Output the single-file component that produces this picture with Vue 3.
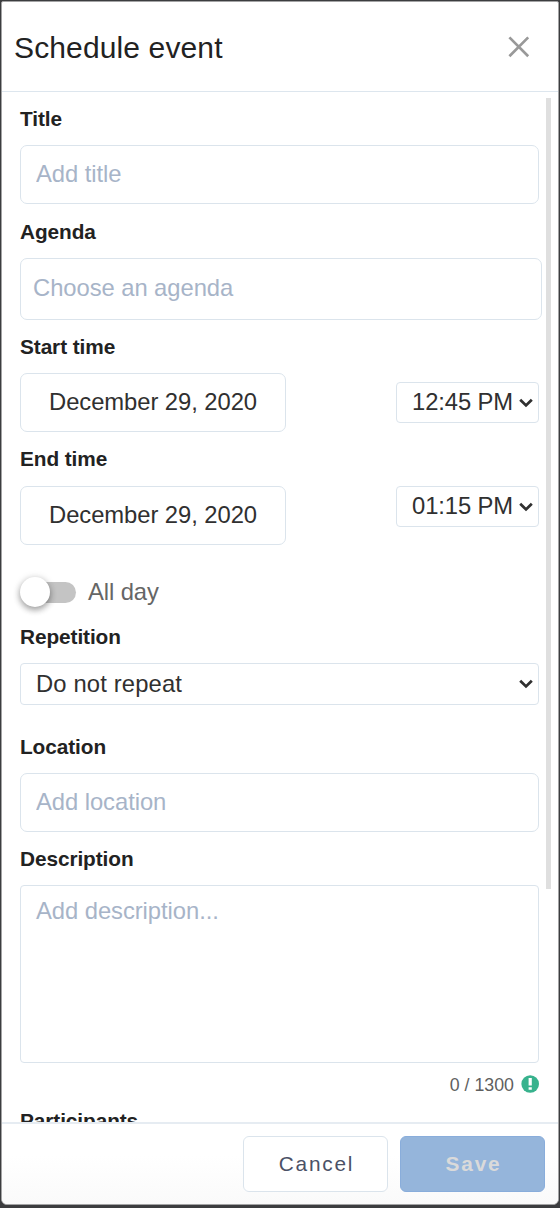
<script setup>
import { ref } from 'vue'

const title = ref('')
const agenda = ref('')
const startTime = ref('12:45 PM')
const endTime = ref('01:15 PM')
const allDay = ref(false)
const repetition = ref('Do not repeat')
const location = ref('')
const description = ref('')
</script>

<template>
  <div class="backdrop">
    <section class="modal">
      <header class="head">
        <h1>Schedule event</h1>
        <button class="close" aria-label="Close">
          <svg width="22" height="22" viewBox="0 0 22 22">
            <path d="M1.4 1.4 20.2 20.2M20.2 1.4 1.4 20.2" fill="none" stroke="#999" stroke-width="2.7" />
          </svg>
        </button>
      </header>

      <div class="body">
        <form class="form">
          <div class="group g-title">
            <label>Title</label>
            <input v-model="title" class="field" placeholder="Add title" />
          </div>
          <div class="group g-agenda">
            <label>Agenda</label>
            <input v-model="agenda" class="field agenda" placeholder="Choose an agenda" />
          </div>
          <div class="group g-start">
            <label>Start time</label>
            <div class="row">
              <button type="button" class="field date">December 29, 2020</button>
              <span class="select time">
                <select v-model="startTime"><option>12:45 PM</option></select>
                <svg class="chev" width="14" height="10" viewBox="0 0 14 10"><path d="M1.2 1.8 7 7.4 12.8 1.8" /></svg>
              </span>
            </div>
          </div>
          <div class="group g-end">
            <label>End time</label>
            <div class="row top">
              <button type="button" class="field date">December 29, 2020</button>
              <span class="select time">
                <select v-model="endTime"><option>01:15 PM</option></select>
                <svg class="chev" width="14" height="10" viewBox="0 0 14 10"><path d="M1.2 1.8 7 7.4 12.8 1.8" /></svg>
              </span>
            </div>
          </div>
          <div class="toggle" @click="allDay = !allDay">
            <span class="switch" :class="{ on: allDay }"><span class="knob"></span></span>
            <span>All day</span>
          </div>
          <div class="group g-rep">
            <label>Repetition</label>
            <span class="select">
              <select v-model="repetition" class="wide"><option>Do not repeat</option></select>
              <svg class="chev" width="14" height="10" viewBox="0 0 14 10"><path d="M1.2 1.8 7 7.4 12.8 1.8" /></svg>
            </span>
          </div>
          <div class="group g-loc">
            <label>Location</label>
            <input v-model="location" class="field" placeholder="Add location" />
          </div>
          <div class="group g-desc">
            <label>Description</label>
            <textarea v-model="description" placeholder="Add description..."></textarea>
          </div>
          <div class="counter">
            <span>{{ description.length }} / 1300</span>
            <svg width="18" height="18" viewBox="0 0 18 18">
              <circle cx="9.2" cy="9" r="8.8" fill="#38b28d" />
              <path d="M7.6 3h3.2v7.4H7.6zM7.6 12.3h3.2v2.5H7.6z" fill="#fff" />
            </svg>
          </div>
          <div class="group g-part">
            <label>Participants</label>
          </div>
        </form>
        <div class="scroll"><div class="thumb"></div></div>
      </div>

      <footer class="foot">
        <button class="btn">Cancel</button>
        <button class="btn save">Save</button>
      </footer>
    </section>
  </div>
</template>

<style>
body {
  margin: 0;
  background: #3c3d3f;
}
</style>

<style scoped>
* {
  box-sizing: border-box;
}
.backdrop {
  height: 1208px;
  padding: 1px 1px 3px;
  background: #3c3d3f;
  overflow: hidden;
  font-family: "Liberation Sans", Arial, sans-serif;
  color: #222;
}
.modal {
  display: flex;
  flex-direction: column;
  height: 1204px;
  background: #fff;
  border: 1px solid #a3a3a4;
  border-radius: 2px 2px 6px 6px;
  overflow: hidden;
}
button,
input,
select,
textarea {
  font-family: inherit;
  margin: 0;
  outline: none;
}
.head {
  flex: none;
  display: flex;
  align-items: center;
  justify-content: space-between;
  height: 90px;
  padding: 0 28px 0 12px;
  border-bottom: 1px solid #dde6ee;
}
h1 {
  margin: 2px 0 0;
  font-size: 30px;
  font-weight: 400;
  line-height: 36px;
  letter-spacing: 0.13px;
}
.close {
  display: flex;
  padding: 0;
  border: 0;
  background: none;
}
.body {
  flex: 1;
  min-height: 0;
  display: flex;
  overflow: hidden;
}
.form {
  width: 519px;
  flex: none;
  margin-left: 18px;
  padding-top: 15px;
}
.group {
  display: flex;
  flex-direction: column;
}
label {
  font-size: 20.8px;
  font-weight: 700;
  line-height: 24px;
  letter-spacing: -0.08px;
}
.field,
textarea,
.select {
  border: 1px solid #dbe4ec;
  background: #fff;
  font-size: 23.8px;
  color: #303030;
}
.field {
  height: 59px;
  margin-top: 14px;
  padding: 0 15px 2px;
  border-radius: 7px;
}
::placeholder {
  color: #a7b4c8;
  opacity: 1;
  letter-spacing: -0.06px;
}
.g-agenda {
  margin-top: 16px;
}
.agenda {
  width: 522px;
  height: 62px;
  padding: 0 12px 2px;
}
.g-start {
  margin-top: 15px;
}
.row {
  display: flex;
  justify-content: space-between;
  align-items: center;
  margin-top: 14px;
}
.row.top {
  align-items: flex-start;
  margin-top: 15px;
}
.date {
  width: 266px;
  margin: 0;
  padding: 0 0 2px;
  text-align: center;
  letter-spacing: -0.06px;
}
.select {
  display: flex;
  align-items: center;
  height: 42px;
  margin-top: 14px;
  padding-right: 5px;
  border-radius: 4px;
}
.row .select {
  width: 143px;
  height: 41px;
  margin: 0;
}
select {
  flex: 1;
  min-width: 0;
  height: 38px;
  padding: 0 0 2px 15px;
  border: 0;
  background: none;
  appearance: none;
  font-size: 23.8px;
  letter-spacing: -0.1px;
  color: #303030;
}
.wide {
  letter-spacing: 0.14px;
}
.chev {
  flex: none;
}
.chev path {
  fill: none;
  stroke: #303030;
  stroke-width: 2.8;
}
.g-end {
  margin-top: 15px;
}
.toggle {
  display: flex;
  align-items: center;
  gap: 12px;
  height: 30px;
  margin-top: 32px;
  font-size: 23.8px;
  letter-spacing: -0.1px;
  color: #666;
}
.switch {
  display: flex;
  align-items: center;
  width: 56px;
  height: 21px;
  border-radius: 11px;
  background: linear-gradient(90deg, transparent 12px, #c4c4c4 12px);
}
.switch.on {
  justify-content: flex-end;
}
.knob {
  width: 30px;
  height: 30px;
  border-radius: 50%;
  background: #fff;
  box-shadow: 0 3px 6px rgba(0, 0, 0, 0.32), 0 1px 9px rgba(0, 0, 0, 0.14);
}
.g-rep {
  margin-top: 18px;
}
.g-loc {
  margin-top: 30px;
}
.g-desc {
  margin-top: 15px;
}
textarea {
  display: block;
  height: 178px;
  margin-top: 14px;
  padding: 11px 15px;
  border-radius: 4px;
  line-height: 28px;
  resize: none;
}
.counter {
  display: flex;
  justify-content: flex-end;
  align-items: center;
  gap: 8px;
  height: 22px;
  margin-top: 10px;
  font-size: 17.8px;
  color: #5f5f5f;
}
.counter span {
  position: relative;
  top: 1px;
  left: 1px;
}
.g-part {
  margin-top: 14px;
}
.scroll {
  flex: none;
  width: 5px;
  margin: 6px 0 0 7px;
}
.thumb {
  height: 791px;
  background: #dfdfdf;
}
.foot {
  flex: none;
  display: flex;
  justify-content: flex-end;
  gap: 12px;
  height: 82px;
  padding: 12px 13px 0 0;
  border-top: 2px solid #e6ecf2;
  background: linear-gradient(#fff 40%, #fafafa);
}
.btn {
  width: 145px;
  height: 56px;
  padding: 0 0 0 2px;
  border: 1px solid #dbe4ec;
  border-radius: 6px;
  background: #fff;
  font-size: 20.8px;
  letter-spacing: 1.8px;
  color: #4b5166;
}
.save {
  border-color: #89addb;
  background: #95b5db;
  font-weight: 700;
  color: #dadada;
}
</style>
